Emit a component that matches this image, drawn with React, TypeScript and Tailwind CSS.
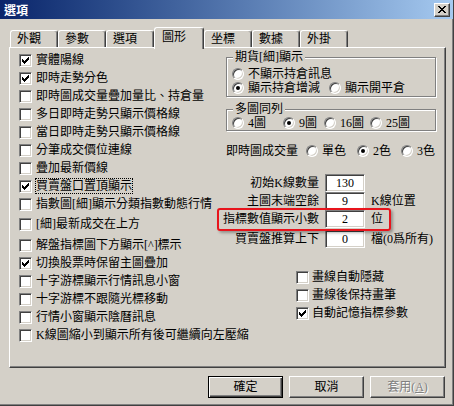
import type { ReactNode } from "react";

const leftRows: { label: string; checked?: boolean; focus?: boolean; gap?: string }[] = [
  { label: "實體陽線", checked: true },
  { label: "即時走勢分色", checked: true },
  { label: "即時圖成交量疊加量比、持倉量" },
  { label: "多日即時走勢只顯示價格線" },
  { label: "當日即時走勢只顯示價格線" },
  { label: "分筆成交價位連線" },
  { label: "疊加最新價線" },
  { label: "買賣盤口置頂顯示", checked: true, focus: true },
  { label: "指數圖[細]顯示分類指數動態行情" },
  { label: "[細]最新成交在上方", gap: "mt-[2px]" },
  { label: "解盤指標圖下方顯示[^]標示", gap: "mt-[3px]" },
  { label: "切換股票時保留主圖疊加", checked: true },
  { label: "十字游標顯示行情訊息小窗" },
  { label: "十字游標不跟隨光標移動" },
  { label: "行情小窗顯示陰曆訊息" },
  { label: "K線圖縮小到顯示所有後可繼續向左壓縮" },
];

const tabs = ["外觀", "參數", "選項", "圖形", "坐標", "數據", "外掛"];

function CheckBox({ checked }: { checked?: boolean }) {
  return (
    <span className="flex h-[13px] w-[13px] shrink-0 items-center justify-center border border-t-[#808080] border-l-[#808080] border-r-white border-b-white bg-white shadow-[inset_1px_1px_0_#404040,inset_-1px_-1px_0_#d4d0c8]">
      {checked && (
        <svg width="7" height="7" viewBox="0 0 7 7" shapeRendering="crispEdges">
          <path
            d="M0 2h1v3H0zM1 3h1v3H1zM2 4h1v3H2zM3 3h1v3H3zM4 2h1v3H4zM5 1h1v3H5zM6 0h1v3H6z"
            fill="#000"
          />
        </svg>
      )}
    </span>
  );
}

function Radio({ checked }: { checked?: boolean }) {
  return (
    <span className="relative h-[12px] w-[12px] shrink-0 rounded-full border border-t-[#808080] border-l-[#808080] border-r-white border-b-white bg-white shadow-[inset_1px_1px_0_#404040,inset_-1px_-1px_0_#d4d0c8]">
      {checked && <span className="absolute left-[3px] top-[3px] h-[4px] w-[4px] rounded-full bg-black" />}
    </span>
  );
}

function RadioItem({ label, checked, w }: { label: string; checked?: boolean; w?: string }) {
  return (
    <div className={`flex items-center gap-[4px] whitespace-nowrap ${w ?? ""}`}>
      <Radio checked={checked} />
      <span>{label}</span>
    </div>
  );
}

function Field({ value }: { value: string }) {
  return (
    <div className="flex h-[18px] w-[40px] shrink-0 items-center justify-center border border-t-[#808080] border-l-[#808080] border-r-white border-b-white bg-white shadow-[inset_1px_1px_0_#404040,inset_-1px_-1px_0_#d4d0c8]">
      {value}
    </div>
  );
}

function Group({ label, className, children }: { label: string; className: string; children: ReactNode }) {
  return (
    <div className={`relative border border-[#808080] shadow-[1px_1px_0_#fff,inset_1px_1px_0_#fff] ${className}`}>
      <span className="absolute -top-[8px] left-[6px] bg-[#d4d0c8] px-[2px]">{label}</span>
      {children}
    </div>
  );
}

function NumRow({ label, value, suffix, className }: { label: string; value: string; suffix?: string; className?: string }) {
  return (
    <div className={`flex h-[18px] items-center ${className ?? ""}`}>
      <div className="flex w-[93px] justify-end whitespace-nowrap">{label}</div>
      <div className="ml-[6px]">
        <Field value={value} />
      </div>
      {suffix && <span className="ml-[6px] whitespace-nowrap">{suffix}</span>}
    </div>
  );
}

function Button({ children, isDefault, disabled }: { children: ReactNode; isDefault?: boolean; disabled?: boolean }) {
  const frame = isDefault
    ? "border border-black shadow-[inset_1px_1px_0_#fff,inset_-1px_-1px_0_#404040,inset_-2px_-2px_0_#808080]"
    : "border border-t-white border-l-white border-r-[#404040] border-b-[#404040] shadow-[inset_-1px_-1px_0_#808080]";
  return (
    <div
      className={`flex h-[22px] w-[75px] items-center justify-center ${frame} ${
        disabled ? "text-[#808080] [text-shadow:1px_1px_0_#fff]" : ""
      }`}
    >
      {children}
    </div>
  );
}

export default function App() {
  return (
    <div className="relative flex h-[406px] w-[454px] flex-col border-r border-b border-[#404040] bg-[#d4d0c8] font-['Liberation_Serif','Noto_Sans_CJK_TC',serif] text-[12px] leading-[14px] text-black shadow-[inset_-1px_-1px_0_#808080]">
      {/* title bar */}
      <div className="flex h-[19px] items-center justify-between bg-linear-to-r from-[#0a246a] to-[#a6caf0] pl-[4px] pr-[3px]">
        <span className="font-['Noto_Sans_CJK_TC',sans-serif] text-[12px] font-bold text-white">選項</span>
        <div className="flex h-[14px] w-[16px] items-center justify-center border border-t-white border-l-white border-r-[#404040] border-b-[#404040] bg-[#d4d0c8] shadow-[inset_-1px_-1px_0_#808080]">
          <svg width="8" height="7" viewBox="0 0 8 7" shapeRendering="crispEdges">
            <path
              d="M0 0h2v1H0zM6 0h2v1H6zM1 1h2v1H1zM5 1h2v1H5zM2 2h4v1H2zM3 3h2v1H3zM2 4h4v1H2zM1 5h2v1H1zM5 5h2v1H5zM0 6h2v1H0zM6 6h2v1H6z"
              fill="#000"
            />
          </svg>
        </div>
      </div>

      {/* tabs */}
      <div className="mt-[8px] flex h-[20px] items-end pl-[10px]">
        {tabs.map((t) =>
          t === "圖形" ? (
            <div
              key={t}
              className="relative z-10 -mb-[2px] h-[22px] w-[50px] rounded-t-[3px] border-t border-l border-r border-t-white border-l-white border-r-[#404040] bg-[#d4d0c8] pl-[7px] pt-[2px] shadow-[inset_-1px_0_0_#808080]"
            >
              {t}
            </div>
          ) : (
            <div
              key={t}
              className="h-[17px] w-[48px] rounded-t-[3px] border-t border-l border-r border-t-white border-l-white border-r-[#404040] pl-[6px] pt-[1px] shadow-[inset_-1px_0_0_#808080]"
            >
              {t}
            </div>
          )
        )}
      </div>

      {/* panel */}
      <div className="ml-[9px] flex h-[321px] w-[437px] border border-t-white border-l-white border-r-[#404040] border-b-[#404040] shadow-[inset_-1px_-1px_0_#808080]">
        <div className="flex w-[216px] shrink-0 flex-col pl-[9px] pt-[3px]">
          {leftRows.map((r) => (
            <div key={r.label} className={`flex h-[18px] items-center gap-[4px] whitespace-nowrap ${r.gap ?? ""}`}>
              <CheckBox checked={r.checked} />
              <span className={r.focus ? "outline-1 outline-dotted outline-black" : ""}>{r.label}</span>
            </div>
          ))}
        </div>

        <div className="flex w-[210px] flex-col">
          <Group label="期貨[細]顯示" className="mt-[9px] h-[40px] pl-[5px] pt-[9px]">
            <div className="flex h-[14px] items-center">
              <RadioItem label="不顯示持倉訊息" />
            </div>
            <div className="flex h-[14px] items-center">
              <RadioItem label="顯示持倉增減" checked w="w-[97px]" />
              <RadioItem label="顯示開平倉" />
            </div>
          </Group>

          <Group label="多圖同列" className="mt-[12px] h-[22px] pl-[5px] pt-[6px]">
            <div className="flex h-[14px] items-center">
              <RadioItem label="4圖" w="w-[51px]" />
              <RadioItem label="9圖" checked w="w-[41px]" />
              <RadioItem label="16圖" w="w-[46px]" />
              <RadioItem label="25圖" />
            </div>
          </Group>

          <div className="mt-[13px] flex h-[14px] items-center">
            <span className="w-[80px] whitespace-nowrap">即時圖成交量</span>
            <RadioItem label="單色" w="w-[51px]" />
            <RadioItem label="2色" checked w="w-[44px]" />
            <RadioItem label="3色" />
          </div>

          <NumRow label="初始K線數量" value="130" className="mt-[16px]" />
          <NumRow label="主圖末端空餘" value="9" suffix="K線位置" />
          <NumRow label="指標數值顯示小數" value="2" suffix="位" />
          <NumRow label="買賣盤推算上下" value="0" suffix="檔(0爲所有)" className="mt-[2px]" />

          <div className="mt-[20px] flex flex-col pl-[70px]">
            {[
              { label: "畫線自動隱藏" },
              { label: "畫線後保持畫筆" },
              { label: "自動記憶指標參數", checked: true },
            ].map((r) => (
              <div key={r.label} className="flex h-[18px] items-center gap-[3px] whitespace-nowrap">
                <CheckBox checked={r.checked} />
                <span>{r.label}</span>
              </div>
            ))}
          </div>
        </div>
      </div>

      {/* buttons */}
      <div className="mt-[8px] flex justify-end gap-[6px] pr-[8px]">
        <Button isDefault>確定</Button>
        <Button>取消</Button>
        <Button disabled>
          套用(<span className="underline">A</span>)
        </Button>
      </div>

      {/* highlight annotation */}
      <div className="pointer-events-none absolute left-[217px] top-[208px] h-[23px] w-[174px] rounded-[3px] border-2 border-[#e8141c] shadow-[2px_2px_3px_rgba(0,0,0,0.3)]" />
    </div>
  );
}
